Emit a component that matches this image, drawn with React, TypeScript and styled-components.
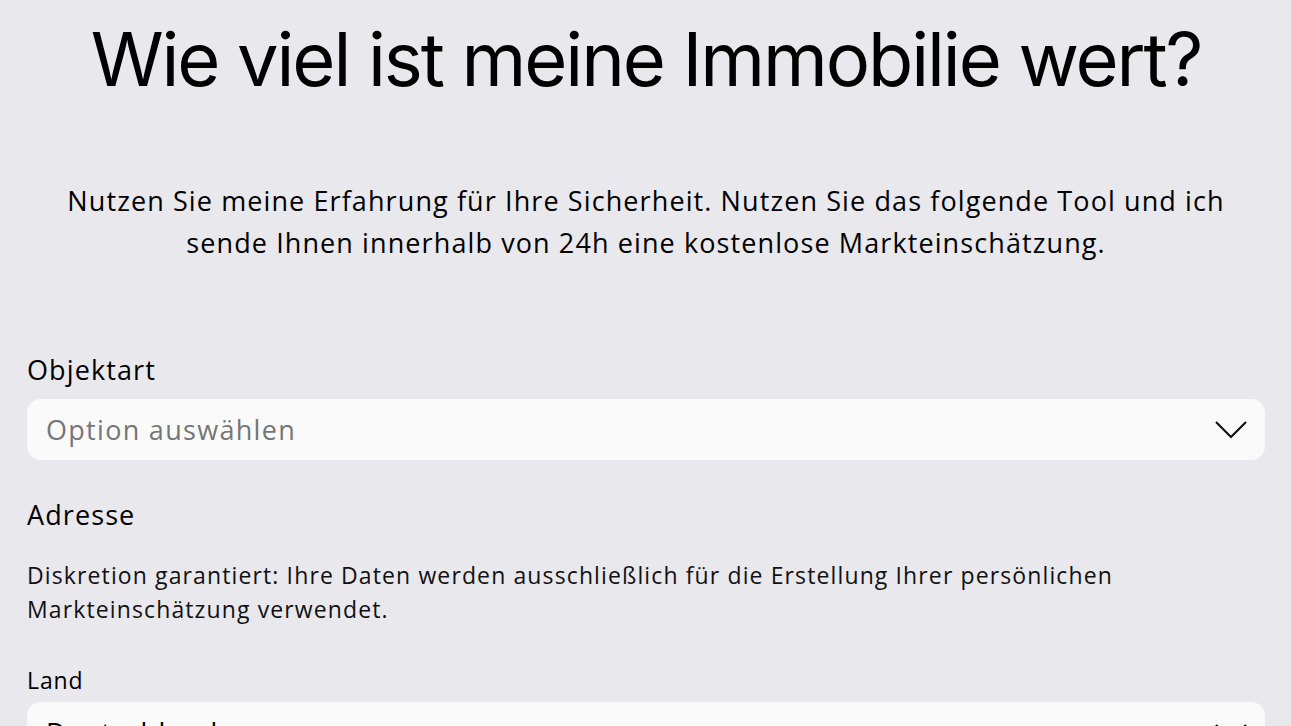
import React from "react";
import styled, { createGlobalStyle } from "styled-components";

const Global = createGlobalStyle`
  html, body { margin: 0; padding: 0; background: #e9e8ed; }
  body { font-family: "Open Sans", "Liberation Sans", sans-serif; color: #0d0d0d; overflow: hidden; }
`;

const Page = styled.main`
  box-sizing: border-box;
  width: 100%;
  height: 726px;
  overflow: hidden;
  padding: 14px 26px 0 27px;
  display: flex;
  flex-direction: column;
`;

const Title = styled.h1`
  margin: 0;
  text-align: center;
  font-family: Inter, "Liberation Sans", sans-serif;
  font-weight: 400;
  font-size: 74px;
  letter-spacing: -2.1px;
  line-height: 90px;
  color: #000;
`;

const Lead = styled.p`
  margin: 76px 0 0;
  text-align: center;
  font-size: 27px;
  letter-spacing: 1.1px;
  line-height: 42px;
  color: #000;
`;

const Form = styled.form`
  margin-top: 88px;
  display: flex;
  flex-direction: column;
`;

const Label = styled.label<{ $small?: boolean }>`
  font-size: ${(p) => (p.$small ? "23px" : "27px")};
  letter-spacing: ${(p) => (p.$small ? "0.9px" : "1.1px")};
  line-height: ${(p) => (p.$small ? "30px" : "36px")};
  color: #000;
  margin-bottom: ${(p) => (p.$small ? "7px" : "11px")};
`;

const SelectBox = styled.div`
  height: 61px;
  box-sizing: border-box;
  background: #fafafa;
  border-radius: 14px;
  padding: 0 18px 0 19px;
  display: flex;
  align-items: center;
  justify-content: space-between;
`;

const SelectText = styled.span<{ $placeholder?: boolean }>`
  font-size: 27px;
  letter-spacing: 1.3px;
  color: ${(p) => (p.$placeholder ? "#767676" : "#000")};
`;

const Group = styled.div<{ $gap: number }>`
  display: flex;
  flex-direction: column;
  margin-top: ${(p) => p.$gap}px;
`;

const Hint = styled.p`
  margin: 14px 0 0;
  font-size: 23px;
  letter-spacing: 1.12px;
  line-height: 34px;
  color: #111;
`;

const Chevron = () => (
  <svg width="32" height="18" viewBox="0 0 32 18" fill="none">
    <polyline points="1,1 16,16 31,1" stroke="#111" strokeWidth="2.2" />
  </svg>
);

export default function App() {
  return (
    <>
      <Global />
      <Page>
        <Title>Wie viel ist meine Immobilie wert?</Title>
        <Lead>
          Nutzen Sie meine Erfahrung für Ihre Sicherheit. Nutzen Sie das folgende Tool und ich
          <br />
          sende Ihnen innerhalb von 24h eine kostenlose Markteinschätzung.
        </Lead>
        <Form>
          <Label>Objektart</Label>
          <SelectBox>
            <SelectText $placeholder>Option auswählen</SelectText>
            <Chevron />
          </SelectBox>
          <Group $gap={37}>
            <Label>Adresse</Label>
            <Hint>
              Diskretion garantiert: Ihre Daten werden ausschließlich für die Erstellung Ihrer persönlichen
              <br />
              Markteinschätzung verwendet.
            </Hint>
          </Group>
          <Group $gap={39}>
            <Label $small>Land</Label>
            <SelectBox>
              <SelectText>Deutschland</SelectText>
              <Chevron />
            </SelectBox>
          </Group>
        </Form>
      </Page>
    </>
  );
}
